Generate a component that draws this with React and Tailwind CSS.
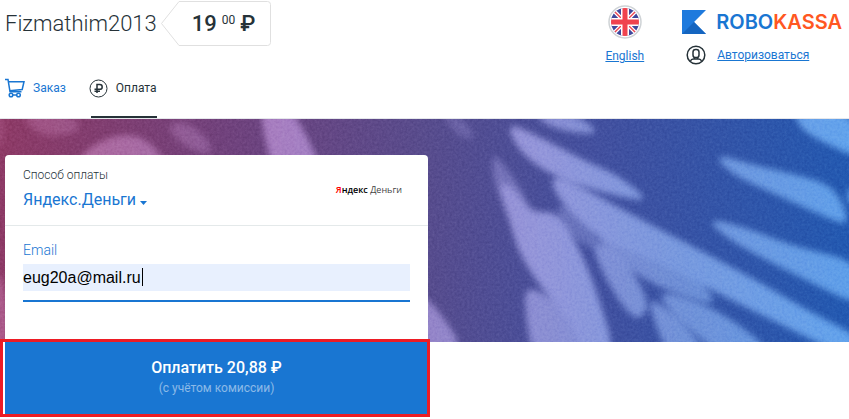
import { useState } from 'react'

// Patches of light on the wall, each one a closed outline of [x, y] points
const leaves = [
  { opacity: 1, points: [[507, 3], [540, 18], [585, 42], [618, 56], [650, 82], [625, 79], [592, 70], [556, 58], [530, 42], [514, 24]] },
  { opacity: 0.9, points: [[534, -6], [570, -6], [590, 5], [598, 15], [572, 14], [546, 6]] },
  { opacity: 0.55, points: [[492, 34], [500, 42], [512, 56], [524, 76], [536, 98], [520, 106], [505, 88], [493, 62]] },
  { opacity: 1, points: [[500, 62], [515, 70], [530, 94], [556, 92], [572, 116], [588, 149], [600, 183], [616, 236], [586, 236], [573, 209], [553, 183], [532, 156], [517, 129], [510, 103], [501, 79]] },
  { opacity: 0.9, points: [[524, 168], [544, 174], [558, 189], [574, 211], [588, 236], [532, 236], [526, 200]] },
  { opacity: 1, points: [[550, 57], [574, 64], [625, 92], [692, 127], [758, 162], [808, 192], [864, 220], [864, 240], [826, 228], [778, 204], [725, 178], [678, 153], [638, 135], [606, 124], [575, 98], [556, 76]] },
  { opacity: 0.85, points: [[598, 112], [638, 132], [678, 153], [704, 165], [718, 187], [685, 178], [650, 164], [622, 144], [598, 122]] },
  { opacity: 0.5, points: [[554, 83], [577, 94], [594, 112], [602, 131], [583, 126], [566, 110]] },
  { opacity: 0.9, points: [[593, 122], [617, 134], [637, 158], [650, 188], [638, 202], [623, 188], [606, 160], [595, 136]] },
  { opacity: 0.9, points: [[658, 171], [702, 184], [736, 203], [774, 234], [716, 234], [688, 208], [666, 188]] },
  { opacity: 0.9, points: [[648, 178], [670, 192], [687, 208], [708, 236], [668, 236], [654, 202]] },
  { opacity: 0.95, points: [[712, 34], [758, 47], [798, 56], [828, 65], [842, 82], [850, 108], [818, 95], [775, 75], [732, 56]] },
  { opacity: 0.95, points: [[706, 99], [745, 108], [792, 127], [864, 144], [864, 190], [808, 162], [758, 137], [725, 118]] },
  { opacity: 1, points: [[792, -10], [838, -10], [864, 12], [864, 42], [818, 21], [800, 9]] },
  { opacity: 0.8, points: [[841, 76], [864, 60], [864, 98]] },
  { opacity: 0.9, points: [[418, 172], [438, 190], [468, 236], [400, 236]] },
  { opacity: 0.35, points: [[440, -8], [467, 2], [476, 22], [458, 18]] },
  { opacity: 0.5, points: [[22, -8], [64, -8], [86, 11], [50, 19], [30, 10]] },
  { opacity: 0.85, points: [[74, 48], [90, 26], [127, 13], [152, 24], [170, 50], [120, 60]] },
  { opacity: 0.5, points: [[165, 7], [184, 1], [207, 18], [214, 37], [185, 29]] },
  { opacity: 1, points: [[260, -12], [290, -12], [308, 19], [324, 56], [274, 56], [264, 16]] },
  { opacity: 0.4, points: [[-8, -6], [4, -2], [3, 24], [-8, 30]] },
  { opacity: 0.7, points: [[-10, 150], [4, 160], [10, 200], [6, 236], [-10, 236]] },
]

// Closed curve through the middles of the outline's sides
function smoothPath(points) {
  const mid = (a, b) => `${(a[0] + b[0]) / 2} ${(a[1] + b[1]) / 2}`
  const last = points[points.length - 1]
  const curves = points.map((p, i) => `Q${p[0]} ${p[1]} ${mid(p, points[(i + 1) % points.length])}`)
  return `M${mid(last, points[0])} ${curves.join(' ')}Z`
}

export default function App() {
  return (
    <div className="min-h-screen bg-white font-['Roboto',sans-serif] text-[#263238]">
      <Header />
      <main className="relative px-[5px] pt-9">
        <Backdrop />
        <PaymentForm />
      </main>
    </div>
  )
}

function Header() {
  return (
    <header className="border-b border-gray-200">
      <div className="flex h-[70px] items-start justify-between pl-[5px] pr-[7px]">
        <div className="flex items-center pt-px">
          <h1 className="text-[22px] font-light leading-[45px]">Fizmathim2013</h1>
          <PriceTag />
        </div>
        <div className="flex items-start gap-[38px] pt-[5px]">
          <div className="flex flex-col items-center gap-[9px]">
            <FlagIcon />
            <a href="#english" className="text-xs leading-4 text-[#1976d2] underline">English</a>
          </div>
          <div className="flex flex-col gap-[11px] pt-[5px]">
            <Logo />
            <div className="flex items-center gap-[11px] pl-1">
              <UserIcon />
              <a href="#login" className="text-xs leading-4 text-[#1976d2] underline">Авторизоваться</a>
            </div>
          </div>
        </div>
      </div>

      {/* Steps */}
      <nav className="flex h-12 gap-[23px] pl-[5px] text-xs">
        <a href="#order" className="flex h-9 items-center gap-2 text-[#1976d2]">
          <CartIcon />
          Заказ
        </a>
        <a href="#payment" className="relative flex h-9 items-center gap-2">
          <RubleIcon />
          Оплата
          <span className="absolute -bottom-3 left-0.5 right-0 h-0.5 bg-[#263238]" />
        </a>
      </nav>
    </header>
  )
}

function PriceTag() {
  return (
    <div className="relative ml-1 flex h-[45px] w-[110px] items-center gap-[5px] pl-[31px] text-[22px] font-medium">
      <svg className="absolute inset-0" width="110" height="45" viewBox="0 0 110 45" fill="none" stroke="#e0e0e0">
        <path d="M18 .5H106.500a3 3 0 0 1 3 3V41.500a3 3 0 0 1-3 3H18L.5 22.500z" />
      </svg>
      <span className="relative">19</span>
      <span className="relative pb-2 text-xs font-normal">00</span>
      <span className="relative">₽</span>
    </div>
  )
}

function PaymentForm() {
  const [email, setEmail] = useState('eug20a@mail.ru')

  return (
    <form className="relative w-[423px] max-w-full" onSubmit={(e) => e.preventDefault()}>
      <div className="h-[187px] rounded-t-sm bg-white">
        {/* Payment method */}
        <div className="flex h-[71px] items-center justify-between border-b border-[#e4e9ea] pl-[18px] pr-[26px]">
          <div className="pt-0.5">
            <p className="text-xs font-light leading-4">Способ оплаты</p>
            <button type="button" className="mt-0.5 flex items-center gap-1 text-base leading-[30px] text-[#1976d2]">
              Яндекс.Деньги
              <svg className="mt-1.5" width="7" height="4" viewBox="0 0 7 4" fill="currentColor">
                <path d="M0 0h7L3.500 4z" />
              </svg>
            </button>
          </div>
          <p className="font-['Open_Sans',sans-serif] text-[9px]">
            <span className="font-semibold text-[#ff0000]">Я</span>
            <span className="font-semibold text-black">ндекс</span>{' '}
            <span className="text-[#444]">Деньги</span>
          </p>
        </div>

        {/* Email */}
        <div className="px-[18px] pt-3">
          <label htmlFor="email" className="block pb-0.5 text-sm font-light leading-6 text-[#1976d2]">Email</label>
          <div className="relative border-b-2 border-[#1976d2] pb-[9px]">
            <input
              id="email"
              type="email"
              value={email}
              onChange={(e) => setEmail(e.target.value)}
              className="peer block h-[27px] w-full bg-[#e8f0fe] font-['Liberation_Sans',sans-serif] text-base text-black outline-none"
            />
            <span className="absolute left-[119px] top-1 h-[18px] w-px bg-black peer-focus:hidden" />
          </div>
        </div>
      </div>

      <button type="submit" className="block h-[72px] w-full bg-[#1976d2] text-center text-white">
        <span className="block text-base font-medium leading-5">Оплатить 20,88 ₽</span>
        <span className="block text-xs leading-5 text-white/50">(с учётом комиссии)</span>
      </button>
      <span className="pointer-events-none absolute -bottom-[3px] -left-[5px] -right-0.5 h-[78px] border-[3px] border-[#ed1c24]" />
    </form>
  )
}

function Backdrop() {
  return (
    <svg
      className="absolute inset-x-0 top-0 h-[223px] w-full"
      viewBox="0 0 849 223"
      preserveAspectRatio="xMidYMid slice"
      aria-hidden="true"
    >
      <defs>
        <linearGradient id="wall" gradientUnits="userSpaceOnUse" x1="0" y1="0" x2="849" y2="30">
          <stop offset="0" stopColor="#8e3a66" />
          <stop offset=".27" stopColor="#70427d" />
          <stop offset=".5" stopColor="#584c8d" />
          <stop offset=".7" stopColor="#43509f" />
          <stop offset="1" stopColor="#2359b1" />
        </linearGradient>
        <linearGradient id="light" gradientUnits="userSpaceOnUse" x1="0" y1="0" x2="849" y2="0">
          <stop offset="0" stopColor="#b9699a" />
          <stop offset=".34" stopColor="#a67fc2" />
          <stop offset=".64" stopColor="#9396da" />
          <stop offset=".8" stopColor="#7899de" />
          <stop offset="1" stopColor="#62a3ec" />
        </linearGradient>
        <filter id="soft" filterUnits="userSpaceOnUse" x="-20" y="-20" width="890" height="263" colorInterpolationFilters="sRGB">
          <feGaussianBlur stdDeviation="3" />
        </filter>
        <filter id="grain" x="0" y="0" width="1" height="1" colorInterpolationFilters="sRGB">
          <feTurbulence type="fractalNoise" baseFrequency=".4" numOctaves="3" seed="4" />
          <feColorMatrix values="1 0 0 0 0  1 0 0 0 0  1 0 0 0 0  0 0 0 0 1" />
        </filter>
      </defs>
      <rect width="849" height="223" fill="url(#wall)" />
      <g fill="url(#light)" filter="url(#soft)">
        {leaves.map((leaf, i) => (
          <path key={i} d={smoothPath(leaf.points)} opacity={leaf.opacity} />
        ))}
      </g>
      <rect className="mix-blend-soft-light" width="849" height="223" filter="url(#grain)" opacity=".22" />
    </svg>
  )
}

function Logo() {
  return (
    <div className="flex items-center gap-2.5">
      <svg width="24" height="24" viewBox="0 0 24 24">
        <path d="M0 0h24L12 12 24 24H0z" fill="#1e7add" />
        <path d="M0 24 12 12 24 24z" fill="#1565c0" />
      </svg>
      <span className="font-['Inter',sans-serif] text-xl font-semibold leading-6 text-[#1976d2]">
        ROBO<span className="text-[#ff5722]">KASSA</span>
      </span>
    </div>
  )
}

function FlagIcon() {
  return (
    <svg width="34" height="34" viewBox="0 0 34 34">
      <clipPath id="flag">
        <circle cx="17" cy="17" r="14" />
      </clipPath>
      <circle cx="17" cy="17" r="16" fill="#fff" stroke="#cfd3d6" strokeWidth="1.500" />
      <g clipPath="url(#flag)">
        <path fill="#3f479b" d="M2 2h30v30H2z" />
        <path d="M3 3l28 28M31 3 3 31" stroke="#fff" strokeWidth="4" />
        <path d="M3 3l28 28M31 3 3 31" stroke="#f0434e" strokeWidth="1.400" />
        <path d="M17 2v30M2 17h30" stroke="#fff" strokeWidth="8" />
        <path d="M17 2v30M2 17h30" stroke="#f0434e" strokeWidth="5" />
      </g>
    </svg>
  )
}

function UserIcon() {
  return (
    <svg width="20" height="20" viewBox="0 0 20 20" fill="none" stroke="#263238" strokeWidth="1.500">
      <circle cx="10" cy="10" r="8.800" />
      <rect x="7" y="4.500" width="6" height="8" rx="2.600" />
      <path d="M8.500 12v2M11.500 12v2M4.500 16c.5-1.500 1.500-2 3-2h5c1.500 0 2.500.5 3 2" />
    </svg>
  )
}

function CartIcon() {
  return (
    <svg width="20" height="20" viewBox="0 0 20 20" fill="none" stroke="#1976d2" strokeWidth="1.500">
      <path d="M0 1.500h3l2 12.200h11.500M3.300 3.700h15.700l-1.800 7.800L4.700 12.700" />
      <circle cx="6" cy="17" r="1.800" />
      <circle cx="13.500" cy="17" r="1.800" />
      <path d="M7.800 17h4" />
    </svg>
  )
}

function RubleIcon() {
  return (
    <svg width="19" height="19" viewBox="0 0 19 19" fill="none" stroke="#263238">
      <circle cx="9.500" cy="9.500" r="8.500" />
      <path d="M8 14V5.500h2.800a2.300 2.300 0 0 1 0 4.800H5.500M5.500 12.300H11" strokeWidth="1.500" />
    </svg>
  )
}
